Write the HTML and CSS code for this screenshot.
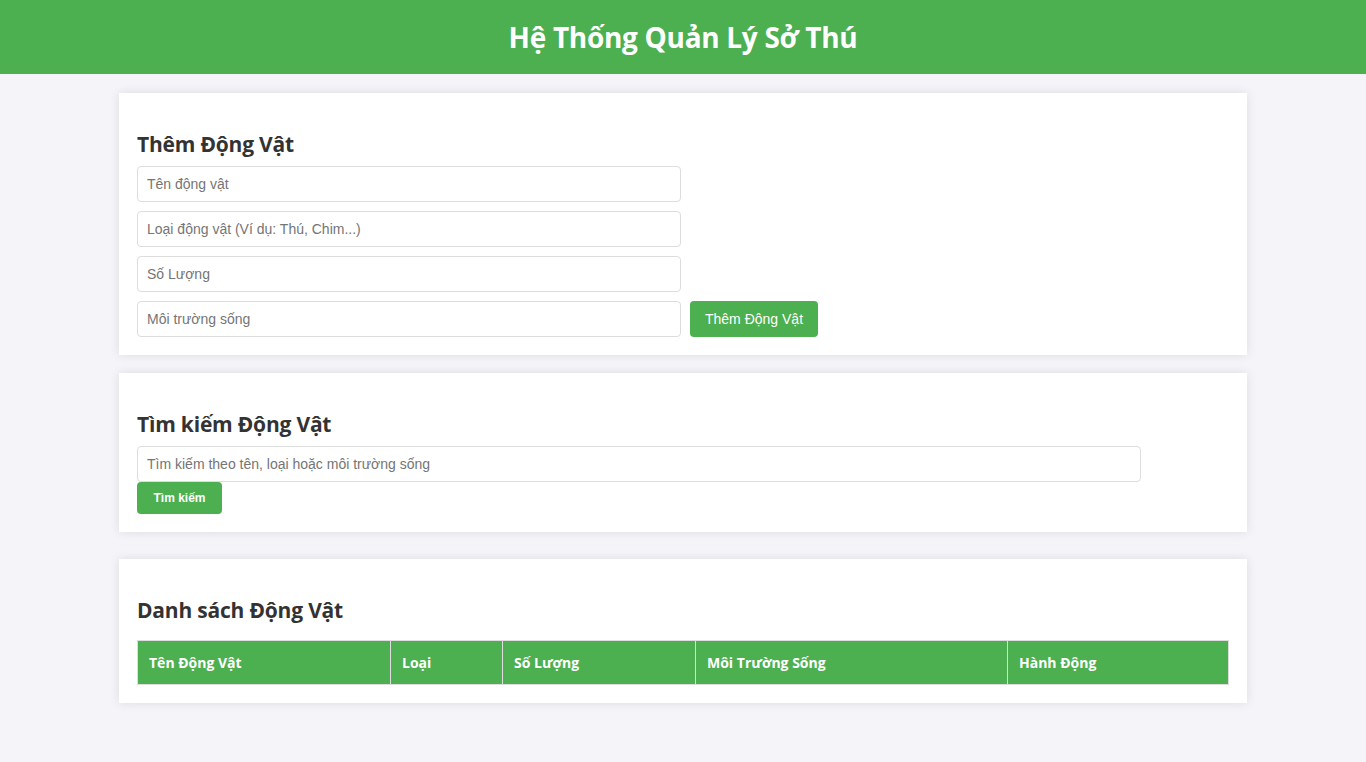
FILE: index.html
```html
<!DOCTYPE html>
<html lang="vi">
<head>
<meta charset="UTF-8">
<title>Hệ Thống Quản Lý Sở Thú</title>
<link rel="stylesheet" href="styles.css">
</head>
<body>
<header class="topbar">
  <h1 class="title">Hệ Thống Quản Lý Sở Thú</h1>
</header>
<main class="container">
  <section class="card">
    <h2 class="card-title">Thêm Động Vật</h2>
    <div class="form">
      <input class="field" type="text" placeholder="Tên động vật">
      <input class="field" type="text" placeholder="Loại động vật (Ví dụ: Thú, Chim...)">
      <input class="field" type="text" placeholder="Số Lượng">
      <div class="row">
        <input class="field" type="text" placeholder="Môi trường sống">
        <button class="btn">Thêm Động Vật</button>
      </div>
    </div>
  </section>
  <section class="card card-search">
    <h2 class="card-title">Tìm kiếm Động Vật</h2>
    <input class="field field-wide" type="text" placeholder="Tìm kiếm theo tên, loại hoặc môi trường sống">
    <button class="btn btn-small">Tìm kiếm</button>
  </section>
  <section class="card">
    <h2 class="card-title">Danh sách Động Vật</h2>
    <table class="table">
      <thead>
        <tr>
          <th class="c1">Tên Động Vật</th>
          <th class="c2">Loại</th>
          <th class="c3">Số Lượng</th>
          <th class="c4">Môi Trường Sống</th>
          <th class="c5">Hành Động</th>
        </tr>
      </thead>
      <tbody></tbody>
    </table>
  </section>
</main>
</body>
</html>
```
FILE: styles.css
```css
* { box-sizing: border-box; }
html, body { margin: 0; padding: 0; }
body {
  background: #f4f4f9;
  font-family: "Open Sans", "Noto Sans", sans-serif;
  color: #333;
}
.topbar {
  background: #4caf50;
  color: #fff;
  height: 74px;
  display: flex;
  align-items: center;
  justify-content: center;
}
.title {
  margin: 0;
  font-size: 28px;
  font-weight: 700;
  letter-spacing: -0.3px;
}
.container {
  width: 1128px;
  margin: 19px auto 0;
  display: flex;
  flex-direction: column;
}
.card {
  background: #fff;
  padding: 18px;
  box-shadow: 0 0 10px rgba(0,0,0,0.1);
  margin-bottom: 18px;
}
.card-search { margin-bottom: 27px; }
.card-title {
  margin: 19px 0 7px;
  font-size: 21px;
  line-height: 29px;
  font-weight: 700;
  color: #333;
  letter-spacing: -0.2px;
}
.form {
  display: flex;
  flex-direction: column;
  gap: 9px;
}
.row {
  display: flex;
  gap: 9px;
}
.field {
  width: 544px;
  height: 36px;
  padding: 0 9px;
  border: 1px solid #ddd;
  border-radius: 4px;
  font-family: "Liberation Sans", Arial, sans-serif;
  font-size: 14px;
  color: #333;
  background: #fff;
  outline: none;
}
.field::placeholder { color: #757575; }
.field-wide { width: 1004px; display: block; }
.btn {
  height: 36px;
  width: 128px;
  background: #4caf50;
  color: #fff;
  border: none;
  border-radius: 4px;
  font-family: "Liberation Sans", Arial, sans-serif;
  font-size: 14px;
}
.btn-small {
  display: block;
  width: 85px;
  height: 32px;
  font-size: 12px;
  font-weight: 700;
}
.table {
  width: 100%;
  border-collapse: collapse;
  margin-top: 15px;
}
.table th {
  background: #4caf50;
  color: #fff;
  text-align: left;
  font-size: 14px;
  font-weight: 700;
  height: 44px;
  padding: 0 11px;
  border: 1px solid #ddd;
}
.c1 { width: 253px; }
.c2 { width: 112px; }
.c3 { width: 193px; }
.c4 { width: 312px; }
```
